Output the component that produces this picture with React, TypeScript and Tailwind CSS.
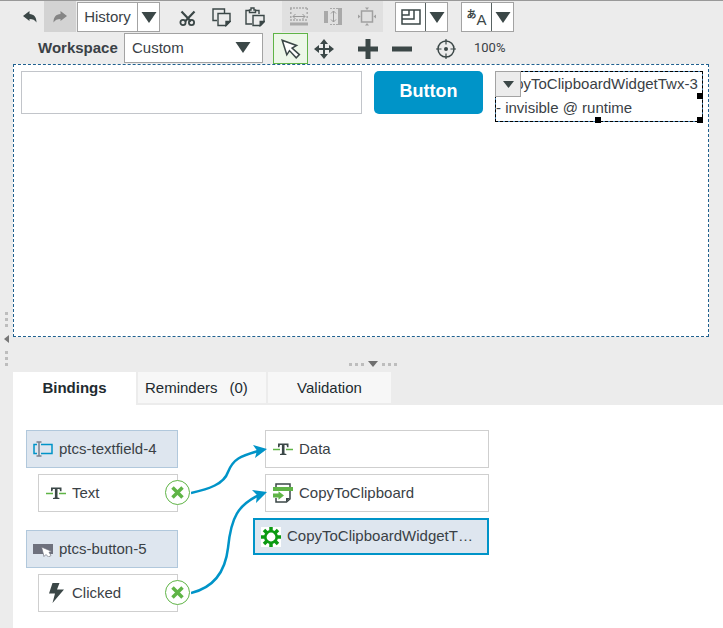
import type { ReactNode } from "react";

const INK = "#3b4747";

function Caret({ className = "" }: { className?: string }) {
  return (
    <svg className={className} width="16" height="11" viewBox="0 0 16 11" aria-hidden="true">
      <path d="M0.5 0h15L8 11z" fill={INK} />
    </svg>
  );
}

function UndoIcon({ flip = false }: { flip?: boolean }) {
  return (
    <svg width="14" height="12" viewBox="0 0 14 12" className={flip ? "-scale-x-100" : ""} aria-hidden="true">
      <path d="M0 5 6.500 0v3c4.500.3 7 2.800 7 8.500-1.500-2.600-3.700-3.500-7-3.600V10z" fill={flip ? "#858585" : INK} />
    </svg>
  );
}

function CutIcon() {
  return (
    <svg width="18" height="17" viewBox="0 0 18 17" fill="none" stroke={INK} aria-hidden="true">
      <path d="M2.500 1.500 12 11.500M15.500 1.500 6 11.500" strokeWidth="2.200" />
      <circle cx="4" cy="12.500" r="2.600" strokeWidth="1.800" />
      <circle cx="12.500" cy="12.500" r="2.600" strokeWidth="1.800" />
    </svg>
  );
}

function CopyIcon() {
  return (
    <svg width="19" height="19" viewBox="0 0 19 19" fill="none" stroke={INK} strokeWidth="1.400" aria-hidden="true">
      <path d="M5 12.500H1V1h11.500v4" />
      <path d="M6 5.500h12v8l-4 4H6z" fill="#ececec" />
      <path d="M18 13.500h-4v4z" fill={INK} />
    </svg>
  );
}

function PasteIcon() {
  return (
    <svg width="20" height="20" viewBox="0 0 20 20" fill="none" stroke={INK} strokeWidth="1.400" aria-hidden="true">
      <path d="M4 3.500H1V17h6M11 3.500h3V7" />
      <path d="M4.500 3V5.500h6V3H9V1H6v2z" />
      <path d="M8 8.500h11v6.500l-3.500 3.500H8z" fill="#ececec" />
      <path d="M19 14.500h-3.800v4z" fill={INK} />
    </svg>
  );
}

function SpaceWidthIcon() {
  return (
    <svg width="18" height="19" viewBox="0 0 18 19" fill="none" stroke="#a9a9a9" aria-hidden="true">
      <path d="M0 1h18M0 13h18" strokeWidth="1.500" strokeDasharray="2 1" />
      <path d="M.8 1v12M17.200 1v12" strokeWidth="1.500" strokeDasharray="2 2" />
      <path d="M3 9.500h12M5.500 7 3 9.500 5.500 12M12.500 7l2.500 2.500-2.500 2.500" stroke="#999" />
      <path d="M0 17h18" strokeWidth="3" />
    </svg>
  );
}

function SpaceHeightIcon() {
  return (
    <svg width="18" height="19" viewBox="0 0 18 19" fill="none" stroke="#a9a9a9" aria-hidden="true">
      <path d="M2 4v12" strokeWidth="4" />
      <path d="M6 1.500h8M6 17.500h8" strokeDasharray="2 1" />
      <path d="M9.500 4v11M7 6.500 9.500 4 12 6.500M7 12.500 9.500 15l2.500-2.500" stroke="#999" />
      <path d="M16 1v17" strokeWidth="4" />
    </svg>
  );
}

function FitIcon() {
  return (
    <svg width="18" height="19" viewBox="0 0 18 19" fill="none" stroke="#a0a0a0" aria-hidden="true">
      <path d="M3.500 4h11v11h-11z" strokeWidth="1.500" />
      <path d="M7 .5h4L9 3zM7 18.500h4L9 16zM0 7.500v4l2.500-2zM18 7.500v4l-2.500-2z" fill="#a0a0a0" stroke="none" />
    </svg>
  );
}

function LayoutIcon() {
  return (
    <svg width="20" height="16" viewBox="0 0 20 16" fill="none" stroke={INK} strokeWidth="1.500" aria-hidden="true">
      <path d="M1 1h18v14H1zM1 10h12V1M1 6h7V1" />
    </svg>
  );
}

function PointerIcon() {
  return (
    <svg width="20" height="20" viewBox="0 0 20 20" fill="#fff" stroke={INK} strokeWidth="1.500" aria-hidden="true">
      <path d="m1.200 1.200 4.600 14.600 2.700-4.200 6.700 7.200 3.200-3.200-7.300-6.500 4.500-2.600z" />
    </svg>
  );
}

function MoveIcon() {
  return (
    <svg width="20" height="20" viewBox="0 0 20 20" aria-hidden="true">
      <path d="M10 3v14M3 10h14" stroke={INK} strokeWidth="2" />
      <path d="m10 0 4 5H6zM10 20l-4-5h8zM0 10l5-4v8zM20 10l-5 4V6z" fill={INK} />
    </svg>
  );
}

function TargetIcon() {
  return (
    <svg width="20" height="20" viewBox="0 0 20 20" fill="none" stroke={INK} aria-hidden="true">
      <circle cx="10" cy="10" r="8" strokeWidth="1.500" />
      <path d="M10 0v5.500M10 14.500V20M0 10h5.500M14.500 10H20" strokeWidth="1.200" />
      <circle cx="10" cy="10" r="2" fill={INK} stroke="none" />
    </svg>
  );
}

function TextfieldIcon() {
  return (
    <svg width="20" height="16" viewBox="0 0 20 16" fill="none" aria-hidden="true">
      <path d="M4 3.500H1v9h3M8 3.500h11v9H8" stroke="#0094c8" strokeWidth="1.500" />
      <path d="M6 1v14M3.500 1H8.500M3.500 15H8.500" stroke="#7b808c" strokeWidth="1.500" />
    </svg>
  );
}

function StringIcon() {
  return (
    <svg width="20" height="14" viewBox="0 0 20 14" aria-hidden="true">
      <path d="M0 7.500h7M13 7.500h7" stroke="#5fb446" strokeWidth="1.500" />
      <path d="M5 1.500h10.500v3.800h-1.300L13.500 3h-2v8.500l1.900.5v1H7v-1l1.900-.5V3H7l-.7 2.300H5z" fill={INK} />
    </svg>
  );
}

function ButtonIcon() {
  return (
    <svg width="20" height="16" viewBox="0 0 20 16" aria-hidden="true">
      <path d="M0 3h20v10H0z" fill="#6e717d" />
      <path d="m8.500 6 2.500 9.500 2-2 2.500 2.500 2.500-1.500-2-3.300 3-.7z" fill="#fff" stroke="#6e717d" strokeWidth=".7" />
    </svg>
  );
}

function BoltIcon() {
  return (
    <svg width="20" height="20" viewBox="0 0 20 20" aria-hidden="true">
      <path d="M6.500 0h7L11 6.500h7L6.500 20 9 10.500H3z" fill={INK} />
    </svg>
  );
}

function ServiceIcon() {
  return (
    <svg width="20" height="20" viewBox="0 0 20 20" fill="none" aria-hidden="true">
      <path d="M3 8V1h14v15l-3.500 3H3v-4" stroke={INK} strokeWidth="1.500" />
      <path d="M17 15h-4v4z" fill={INK} />
      <path d="M0 4h20v4H0z" fill="#5fb446" />
      <path d="M0 10.500h5.500V8.300L11 12.500l-5.500 4.200v-2.200H0z" fill="#5fb446" />
    </svg>
  );
}

function GearIcon() {
  return (
    <svg width="20" height="20" viewBox="0 0 20 20" className="bg-white" aria-hidden="true">
      <g stroke="#0b9a12" fill="none">
        <path
          d="M10 0v4M10 16v4M0 10h4M16 10h4M3 3l3 3M14 14l3 3M17 3l-3 3M3 17l3-3"
          strokeWidth="3.500"
        />
        <circle cx="10" cy="10" r="5.700" strokeWidth="2.600" />
      </g>
    </svg>
  );
}

function SplitButton({ label, icon, className = "" }: { label: string; icon: ReactNode; className?: string }) {
  return (
    <div className={`mt-px flex h-[30px] border border-[#a3a3a3] bg-white ${className}`}>
      <button className="flex flex-1 items-center justify-center" aria-label={label}>
        {icon}
      </button>
      <button
        className="flex w-[22px] items-center justify-center border-l border-[#596363]"
        aria-label={`${label} options`}
      >
        <Caret />
      </button>
    </div>
  );
}

function Dots({ vertical = false }: { vertical?: boolean }) {
  return (
    <span className={`flex gap-[3px] ${vertical ? "flex-col" : ""}`}>
      {[0, 1, 2].map((n) => (
        <span key={n} className="size-[3px] bg-[#bdbdbd]" />
      ))}
    </span>
  );
}

function Widget({ icon, name }: { icon: ReactNode; name: string }) {
  return (
    <div className="flex h-[38px] items-center gap-[6px] border border-[#b1c8dc] bg-[#dee6ef] px-[6px]">
      {icon}
      <span>{name}</span>
    </div>
  );
}

function Source({ icon, name }: { icon: ReactNode; name: string }) {
  return (
    <div className="relative ml-3 flex h-[38px] items-center gap-[6px] border border-[#cfcfcf] bg-white px-[7px]">
      {icon}
      <span>{name}</span>
      <button
        aria-label={`Remove ${name} binding`}
        className="absolute -right-[13px] top-[5px] flex size-[25px] items-center justify-center rounded-full border border-[#5fb446] bg-white"
      >
        <svg width="13" height="13" viewBox="0 0 13 13" aria-hidden="true">
          <path d="m1.500 1.500 10 10M11.500 1.500l-10 10" stroke="#5fb446" strokeWidth="3.500" />
        </svg>
      </button>
    </div>
  );
}

function Target({ icon, name }: { icon: ReactNode; name: string }) {
  return (
    <div className="ml-3 flex h-[38px] items-center gap-[6px] border border-[#cfcfcf] bg-white px-[7px]">
      {icon}
      <span>{name}</span>
    </div>
  );
}

function Toolbar() {
  const tool = "flex h-[31px] shrink-0 items-center justify-center";
  return (
    <header>
      <div className="flex h-[31px]">
        <button className={`${tool} ml-[2px] w-[29px]`} aria-label="Undo">
          <UndoIcon />
        </button>
        <button className={`${tool} w-8 bg-[#d3d3d3]`} aria-label="Redo" disabled>
          <UndoIcon flip />
        </button>
        <div className="ml-px mt-px flex h-[30px] w-[83px] border border-[#a3a3a3] bg-white">
          <button className="flex-1">History</button>
          <button
            className="flex w-[22px] items-center justify-center border-l border-[#a3a3a3]"
            aria-label="History options"
          >
            <Caret />
          </button>
        </div>
        <button className={`${tool} ml-3 w-8 pt-1`} aria-label="Cut">
          <CutIcon />
        </button>
        <button className={`${tool} w-[34px] pt-px`} aria-label="Copy">
          <CopyIcon />
        </button>
        <button className={`${tool} w-[33px] pt-px`} aria-label="Paste">
          <PasteIcon />
        </button>
        <div className="ml-[11px] flex bg-[#e0e0e0]">
          <button className={`${tool} w-[34px]`} aria-label="Distribute horizontally" disabled>
            <SpaceWidthIcon />
          </button>
          <button className={`${tool} w-[34px]`} aria-label="Distribute vertically" disabled>
            <SpaceHeightIcon />
          </button>
          <button className={`${tool} w-[33px]`} aria-label="Fit" disabled>
            <FitIcon />
          </button>
        </div>
        <SplitButton label="Layout" className="ml-3 w-[53px]" icon={<LayoutIcon />} />
        <SplitButton
          label="Language"
          className="ml-[13px] w-[53px]"
          icon={
            <span className="flex text-[#3b4747]">
              <span className="font-['Noto_Sans_CJK_JP',sans-serif] text-[10px] font-bold leading-[14px]">あ</span>
              <span className="pt-[5px] text-[15px] leading-[15px]">A</span>
            </span>
          }
        />
      </div>
      <div className="flex h-8 items-start pt-px">
        <label htmlFor="workspace" className="ml-[25px] w-[86px] font-bold leading-[30px]">
          Workspace
        </label>
        <div className="relative">
          <select
            id="workspace"
            className="h-[30px] w-[139px] appearance-none border border-[#a3a3a3] bg-white pl-[7px]"
          >
            <option>Custom</option>
          </select>
          <Caret className="pointer-events-none absolute right-3 top-[9px]" />
        </div>
        <button className={`${tool} ml-[10px] w-[35px] border border-[#5fb446] bg-[#edf7e9]`} aria-label="Select">
          <PointerIcon />
        </button>
        <button className={`${tool} w-8`} aria-label="Move">
          <MoveIcon />
        </button>
        <button className={`${tool} ml-[11px] w-[34px]`} aria-label="Zoom in">
          <svg width="20" height="20" viewBox="0 0 20 20" aria-hidden="true">
            <path d="M10 0v20M0 10h20" stroke={INK} strokeWidth="5" />
          </svg>
        </button>
        <button className={`${tool} w-[34px]`} aria-label="Zoom out">
          <svg width="20" height="20" viewBox="0 0 20 20" aria-hidden="true">
            <path d="M0 10h20" stroke={INK} strokeWidth="5" />
          </svg>
        </button>
        <button className={`${tool} ml-[10px] w-[34px]`} aria-label="Reset zoom">
          <TargetIcon />
        </button>
        <span className="ml-[11px] font-[Roboto,sans-serif] text-[13px] leading-[30px]">100%</span>
      </div>
    </header>
  );
}

function Canvas() {
  return (
    <section className="mr-[14px] flex h-[273px] items-start gap-3 border border-dashed border-[#1f608f] bg-white pl-[7px] pr-[5px] pt-[6px]">
      <input aria-label="Text field" className="h-[43px] min-w-0 flex-1 border border-[#c2c5ca] px-2" />
      <button className="h-[43px] w-[109px] shrink-0 rounded-[5px] bg-[#0094c8] pb-[3px] text-[18px] font-bold text-white">
        Button
      </button>
      <div className="relative h-[51px] w-[208px] shrink-0 border border-dashed border-black bg-[#4b86b4] leading-6">
        <div className="h-full bg-white">
          <p className="whitespace-nowrap">CopyToClipboardWidgetTwx-3</p>
          <p>- invisible @ runtime</p>
        </div>
        <button
          className="absolute -left-px -top-px flex size-[26px] items-center justify-center border border-[#a3a3a3] bg-[#ececec]"
          aria-label="Widget menu"
        >
          <svg width="11" height="7" viewBox="0 0 11 7" aria-hidden="true">
            <path d="M0 0h11L5.500 7z" fill={INK} />
          </svg>
        </button>
        <span className="absolute -right-px top-[21px] size-[6px] bg-black" />
        <span className="absolute -bottom-[2px] -right-px size-[6px] bg-black" />
        <span className="absolute -bottom-[2px] left-[99px] size-[6px] bg-black" />
      </div>
    </section>
  );
}

function Bindings() {
  return (
    <section className="relative flex flex-1 items-start bg-white pl-[13px] pt-[25px]">
      <div className="flex w-[152px] flex-col gap-[18px]">
        <div className="flex flex-col gap-[6px]">
          <Widget icon={<TextfieldIcon />} name="ptcs-textfield-4" />
          <Source icon={<StringIcon />} name="Text" />
        </div>
        <div className="flex flex-col gap-[6px]">
          <Widget icon={<ButtonIcon />} name="ptcs-button-5" />
          <Source icon={<BoltIcon />} name="Clicked" />
        </div>
      </div>
      <div className="ml-[75px] flex w-[236px] flex-col gap-[6px]">
        <Target icon={<StringIcon />} name="Data" />
        <Target icon={<ServiceIcon />} name="CopyToClipboard" />
        <div className="flex h-[37px] items-center gap-[6px] border-2 border-[#0094c8] bg-[#dee6ef] px-[6px]">
          <GearIcon />
          <span className="whitespace-nowrap">CopyToClipboardWidgetT…</span>
        </div>
      </div>
      <svg
        className="pointer-events-none absolute left-[178px] top-[25px]"
        width="78"
        height="182"
        viewBox="191 430 78 182"
        fill="none"
        aria-hidden="true"
      >
        <path d="M191 493C209 489 224 484 228 472C233 459 240 456 260 450.500" stroke="#0094c8" strokeWidth="2.500" />
        <path d="M191 593C212 588 225 574 228 548C231 517 238 505 260 494.500" stroke="#0094c8" strokeWidth="2.500" />
        <path d="m267 449-14-4 4 5.500-2 7.500z" fill="#0094c8" />
        <path d="m267 492-15-2 5 5-1 8z" fill="#0094c8" />
      </svg>
    </section>
  );
}

export default function App() {
  return (
    <div className="flex min-h-screen border-t border-[#999] bg-[#ececec] font-['Liberation_Sans',Arial,sans-serif] text-[15px] text-[#3a4146]">
      <aside className="flex w-[13px] shrink-0 flex-col items-center justify-center gap-2 pr-px pt-12">
        <Dots vertical />
        <svg width="5" height="8" viewBox="0 0 5 8" aria-hidden="true">
          <path d="M5 0v8L0 4z" fill="#777" />
        </svg>
        <Dots vertical />
      </aside>
      <main className="flex min-w-0 flex-1 flex-col">
        <Toolbar />
        <Canvas />
        <div className="flex h-[35px] items-end justify-center gap-[4px] pb-[5px] pl-[10px]">
          <span className="pb-px">
            <Dots />
          </span>
          <svg width="10" height="6" viewBox="0 0 10 6" aria-hidden="true">
            <path d="M0 0h10L5 6z" fill="#6f6f6f" />
          </svg>
          <span className="pb-px">
            <Dots />
          </span>
        </div>
        <nav role="tablist" className="flex h-[33px] items-start gap-[2px] text-[#222b30]">
          <button role="tab" aria-selected="true" className="h-[33px] w-[123px] bg-white pb-px font-bold">
            Bindings
          </button>
          <button
            role="tab"
            aria-selected="false"
            className="flex h-[31px] w-32 items-center gap-3 bg-[#f7f7f7] pl-[7px] pt-[2px]"
          >
            <span>Reminders</span>
            <span>(0)</span>
          </button>
          <button role="tab" aria-selected="false" className="h-[31px] w-[123px] bg-[#f7f7f7] pt-[2px]">
            Validation
          </button>
        </nav>
        <Bindings />
      </main>
    </div>
  );
}
